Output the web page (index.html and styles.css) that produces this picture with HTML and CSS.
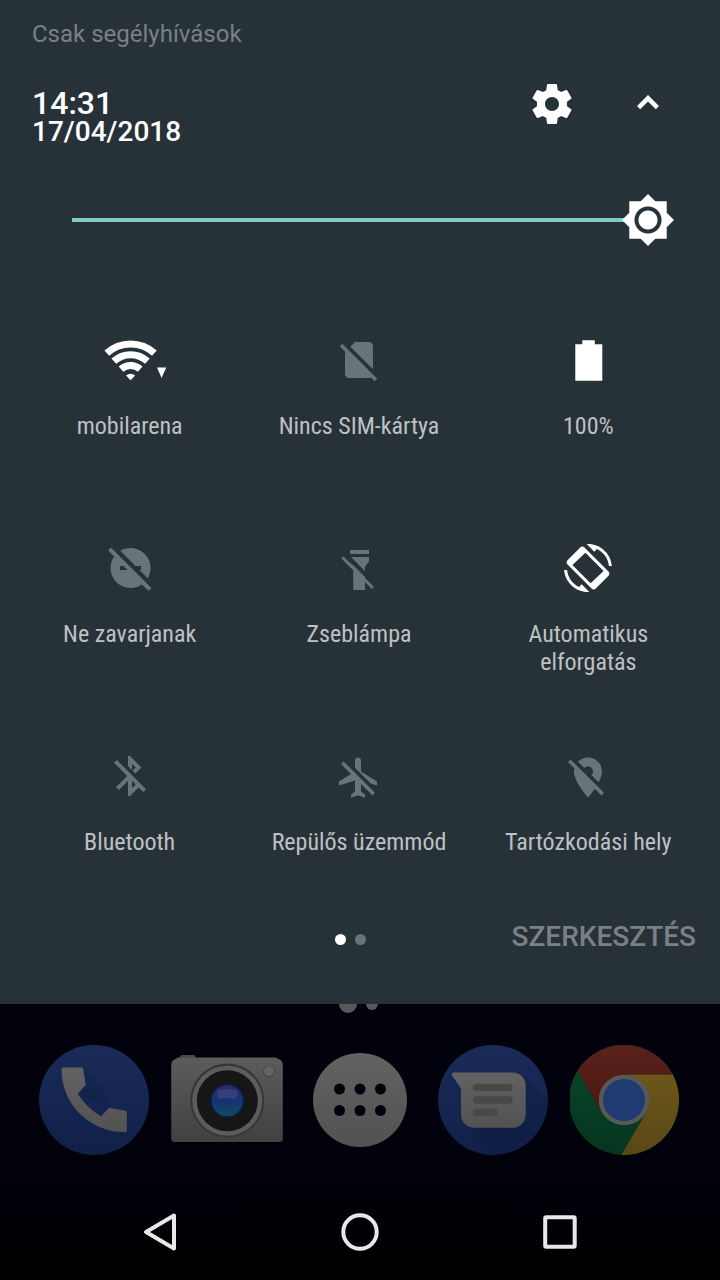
FILE: index.html
```html
<!DOCTYPE html>
<html lang="hu">
<head>
<meta charset="utf-8">
<meta name="viewport" content="width=device-width, initial-scale=1">
<title>Gyorsbeállítások</title>
<link rel="stylesheet" href="styles.css">
</head>
<body>
<main class="panel">
  <p class="carrier">Csak segélyhívások</p>
  <header class="header">
    <div class="clock">
      <time class="time">14:31</time>
      <time class="date" datetime="2018-04-17">17/04/2018</time>
    </div>
    <div class="actions">
      <button class="icon-button" type="button" aria-label="Beállítások">
        <svg width="48" height="48" viewBox="0 0 24 24"><path d="M19.43 12.98c.04-.32.07-.64.07-.98s-.03-.66-.07-.98l2.11-1.65c.19-.15.24-.42.12-.64l-2-3.46c-.12-.22-.39-.3-.61-.22l-2.49 1c-.52-.4-1.08-.73-1.69-.98l-.38-2.65C14.46 2.18 14.25 2 14 2h-4c-.25 0-.46.18-.49.42l-.38 2.65c-.61.25-1.17.59-1.69.98l-2.49-1c-.23-.09-.49 0-.61.22l-2 3.46c-.13.22-.07.49.12.64l2.11 1.65c-.04.32-.07.65-.07.98s.03.66.07.98l-2.11 1.65c-.19.15-.24.42-.12.64l2 3.46c.12.22.39.3.61.22l2.49-1c.52.4 1.08.73 1.69.98l.38 2.65c.03.24.24.42.49.42h4c.25 0 .46-.18.49-.42l.38-2.65c.61-.25 1.17-.59 1.69-.98l2.49 1c.23.09.49 0 .61-.22l2-3.46c.12-.22.07-.49-.12-.64l-2.11-1.65zM12 15.5c-1.93 0-3.5-1.57-3.5-3.5s1.57-3.5 3.5-3.5 3.5 1.57 3.5 3.5-1.57 3.5-3.5 3.5z"/></svg>
      </button>
      <button class="icon-button" type="button" aria-label="Összecsukás">
        <svg width="48" height="48" viewBox="0 0 48 48"><path d="M24 15L13 26l3.200 3.200L24 21.400l7.800 7.800L35 26z"/></svg>
      </button>
    </div>
  </header>

  <div class="brightness">
    <input class="slider" type="range" min="0" max="100" value="100" aria-label="Fényerő">
  </div>

  <div class="tiles">
    <button class="tile on" type="button">
      <svg width="80" height="48" viewBox="-40 -24 80 48">
        <g fill="none" stroke="#fff" stroke-width="7"><path d="M-23.200-6.800a35.500 35.500 0 0 1 47.600 0"/><path d="M-16.200 1.200a25 25 0 0 1 33.600 0"/><path d="M-9 9.200a14.500 14.500 0 0 1 19.200 0"/></g>
        <path d="M.6 20.300L-4 15.500Q.6 11.800 5.200 15.500zM27 7.500h9.200L31.600 18z"/>
      </svg>
      <span class="label">mobilarena</span>
    </button>
    <button class="tile off" type="button">
      <svg width="48" height="48" viewBox="0 0 24 24"><path d="M18.990 5c0-1.100-.89-2-1.990-2h-7L7.660 5.340 19 16.680 18.990 5zM3.650 3.880L2.380 5.150 5 7.770V19c0 1.100.9 2 2 2h10.010c.35 0 .67-.1.960-.26l1.880 1.880 1.270-1.270L3.650 3.880z"/></svg>
      <span class="label">Nincs SIM-kártya</span>
    </button>
    <button class="tile on" type="button">
      <svg width="48" height="48" viewBox="0 0 48 48"><path d="M18.300 4.300h12.500v4h7.500v36.500H11.300V8.300h7z"/></svg>
      <span class="label">100%</span>
    </button>
    <button class="tile off" type="button">
      <svg width="48" height="48" viewBox="0 0 48 48">
        <path d="M24.500 4a20 20 0 1 0 .1 0zM14 22v4h21V22z" fill-rule="evenodd"/>
        <path class="cut" d="M3-1L50 46"/><path class="slash wide" d="M3.500 5L44 45.500"/>
      </svg>
      <span class="label">Ne zavarjanak</span>
    </button>
    <button class="tile off" type="button">
      <svg width="48" height="48" viewBox="0 0 48 48">
        <path d="M15 6h19v4H15zM15 13h19v4l-4 6v23H18.500V23L15 17z"/>
        <path class="cut wide-cut" d="M9 9L42 42"/><path class="slash" d="M7.500 13.500L38 44"/>
        <path d="M18.500 27l11 11v8h-11z"/>
      </svg>
      <span class="label">Zseblámpa</span>
    </button>
    <button class="tile on" type="button">
      <svg width="48" height="48" viewBox="0 0 24 24"><path fill-rule="evenodd" d="M16.480 2.520c3.270 1.550 5.610 4.720 5.970 8.480h1.500C23.440 4.840 18.290 0 12 0l-.66.03 3.810 3.810 1.330-1.320zM10.230 1.750c-.59-.59-1.540-.59-2.120 0L1.750 8.110c-.59.59-.59 1.540 0 2.120l12.020 12.020c.59.59 1.540.59 2.120 0l6.360-6.360c.59-.59.59-1.540 0-2.120L10.230 1.750zM10.700 4.400L19.800 13.500 13.300 19.600 4.200 10.500zM7.520 21.480C4.250 19.940 1.910 16.760 1.550 13H.05C.56 19.160 5.710 24 12 24l.66-.03-3.810-3.810-1.330 1.320z"/></svg>
      <span class="label">Automatikus elforgatás</span>
    </button>
    <button class="tile off" type="button">
      <svg width="48" height="48" viewBox="0 0 24 24"><path d="M13 5.830l1.880 1.880-1.600 1.600 1.410 1.410 3.020-3.020L12 2h-1v5.030l2 2v-3.200zM5.410 4L4 5.410 10.590 12 5 17.590 6.410 19 11 14.410V22h1l4.290-4.290 2.300 2.290L20 18.590 5.410 4zM13 18.170v-3.760l1.880 1.880L13 18.170z"/></svg>
      <span class="label">Bluetooth</span>
    </button>
    <button class="tile off" type="button">
      <svg width="48" height="48" viewBox="0 -.7 24 24"><path d="M13 9V3.500c0-.83-.67-1.500-1.500-1.500S10 2.670 10 3.500v3.680l7.830 7.830L21 16v-2l-8-5zM3 5.270l4.990 4.990L2 14v2l8-2.500V19l-2 1.500V22l3.500-1 3.500 1v-1.500L13 19v-3.730L18.730 21 20 19.730 4.270 4 3 5.270z"/></svg>
      <span class="label">Repülős üzemmód</span>
    </button>
    <button class="tile off" type="button">
      <svg width="48" height="48" viewBox="0 -.7 24 24"><path d="M12 6.500c1.380 0 2.500 1.120 2.500 2.500 0 .74-.33 1.390-.83 1.850l3.630 3.630c.98-1.860 1.700-3.800 1.700-5.480 0-3.870-3.130-7-7-7-1.980 0-3.760.83-5.040 2.150l3.190 3.190c.46-.52 1.110-.84 1.850-.84zm4.370 9.600l-4.630-4.630-.11-.11L3.270 3 2 4.270l3.180 3.180C5.070 7.950 5 8.470 5 9c0 5.250 7 13 7 13s1.670-1.850 3.380-4.350L18.730 21 20 19.730l-3.630-3.630z"/></svg>
      <span class="label">Tartózkodási hely</span>
    </button>
  </div>

  <footer class="footer">
    <div class="pager"><span class="dot current"></span><span class="dot"></span></div>
    <button class="edit" type="button">SZERKESZTÉS</button>
  </footer>
</main>

<section class="home">
  <div class="home-pager"><span class="home-dot current"></span><span class="home-dot"></span></div>
  <div class="dock">
    <button class="app" type="button" aria-label="Telefon">
      <svg width="112" height="112" viewBox="-56 -56 112 112">
        <defs>
          <linearGradient id="blue" x1="0" y1="0" x2="0" y2="1"><stop offset="0" stop-color="#1a2b59"/><stop offset="1" stop-color="#102048"/></linearGradient>
          <linearGradient id="grey" x1="0" y1="0" x2="0" y2="1"><stop offset="0" stop-color="#626262"/><stop offset="1" stop-color="#525252"/></linearGradient>
        </defs>
        <circle r="55" fill="url(#blue)"/>
        <path fill="#0d1a3c" opacity=".25" d="M-11-32L12 -8 14 8-16-6z"/>
        <path fill="url(#grey)" d="M-31-32.500h18.500q1.500 0 1.700 1.500l2.400 15q.1 1-.6 1.700L-16.300-6Q-7 8 7 16.300L14 8.900q1-1 2-.8l15.500 2.700q1.300.2 1.300 1.700v18q0 1.700-1.700 1.700C-4 32-32.500 5-32.500-31q0-1.500 1.500-1.500z"/>
      </svg>
    </button>
    <button class="app" type="button" aria-label="Kamera">
      <svg width="112" height="112" viewBox="-56 -56 112 112">
        <defs>
          <linearGradient id="body" x1="0" y1="0" x2="0" y2="1"><stop offset="0" stop-color="#5c5c5c"/><stop offset="1" stop-color="#414141"/></linearGradient>
          <linearGradient id="lens" x1="0" y1="0" x2="0" y2="1"><stop offset="0" stop-color="#2e2a66"/><stop offset=".5" stop-color="#163372"/><stop offset="1" stop-color="#124a5c"/></linearGradient>
        </defs>
        <rect x="-47" y="-45" width="15.500" height="4.500" rx="2" fill="#484848"/>
        <path fill="url(#body)" d="M-49-42.500h98l5 3q1.800 1.500 1.800 4v74q0 3.500-3.500 3.500h-104.600q-3.500 0-3.500-3.500v-74q0-2.500 1.800-4z"/>
        <circle cx=".3" cy=".5" r="37" fill="#363636"/>
        <circle cx=".3" cy=".7" r="35" fill="#5c5c5c"/>
        <circle cx=".3" cy=".7" r="30.500" fill="#161616"/>
        <circle cx=".3" cy=".7" r="17" fill="#0e1a4c"/>
        <circle cx=".3" cy=".7" r="15.500" fill="url(#lens)"/>
        <path d="M-10-9Q0-13 11-9L9-1Q0-3-9-1z" fill="#6a70a8" opacity=".28"/>
        <circle cx="42" cy="-28.300" r="6" fill="#484848"/><circle cx="42" cy="-28.800" r="5" fill="#646464"/>
      </svg>
    </button>
    <button class="app" type="button" aria-label="Alkalmazások">
      <svg width="112" height="112" viewBox="-56 -56 112 112">
        <circle r="47" fill="url(#grey)"/>
        <g fill="#00010a"><circle cx="-20.500" cy="-11" r="5.500"/><circle cy="-11" r="5.500"/><circle cx="20.500" cy="-11" r="5.500"/><circle cx="-20.500" cy="10.500" r="5.500"/><circle cy="10.500" r="5.500"/><circle cx="20.500" cy="10.500" r="5.500"/></g>
      </svg>
    </button>
    <button class="app" type="button" aria-label="Üzenetek">
      <svg width="112" height="112" viewBox="-56 -56 112 112">
        <circle r="55" fill="url(#blue)"/>
        <path fill="#0d1a3c" opacity=".3" d="M31-23L55-1A55 55 0 0 1 0 55L-28 24z"/>
        <path fill="url(#grey)" d="M-39.500-27.500h59A13 13 0 0 1 32.700-14.500v29.200a13 13 0 0 1-13 13h-38.700a13 13 0 0 1-13-13V-11.500l-9-13q-1-2.500 1.500-3z"/>
        <path stroke="#484848" stroke-width="7.500" stroke-linecap="round" d="M-16.500-12.500h32.500M-16.500 0h32.500M-16.500 12.500h17.500"/>
      </svg>
    </button>
    <button class="app" type="button" aria-label="Chrome">
      <svg width="112" height="112" viewBox="-54 -56 112 112">
        <defs>
          <linearGradient id="red" x1="0" y1="0" x2="0" y2="1"><stop offset="0" stop-color="#5a221b"/><stop offset="1" stop-color="#4c1713"/></linearGradient>
          <linearGradient id="yellow" x1="0" y1="0" x2="0" y2="1"><stop offset="0" stop-color="#6c5719"/><stop offset="1" stop-color="#594716"/></linearGradient>
          <linearGradient id="green" x1="0" y1="0" x2="0" y2="1"><stop offset="0" stop-color="#07482a"/><stop offset="1" stop-color="#06351f"/></linearGradient>
        </defs>
        <circle r="55" fill="url(#green)"/>
        <path fill="url(#yellow)" d="M0-25.500h48.700A55 55 0 0 1-2.500 55L22 12.700z"/>
        <path fill="url(#red)" d="M-46.400-29.500A55 55 0 0 1 48.700-25.500H0L-22 12.700z"/>
        <circle r="25.300" fill="#585858"/><circle r="21" fill="#1f3b72"/>
      </svg>
    </button>
  </div>
  <nav class="nav">
    <button class="nav-button" type="button" aria-label="Vissza"><svg width="48" height="48" viewBox="0 0 48 48"><path d="M38 7.500v33L10 24z"/></svg></button>
    <button class="nav-button" type="button" aria-label="Kezdőképernyő"><svg width="48" height="48" viewBox="0 0 48 48"><circle cx="24" cy="24" r="16.700"/></svg></button>
    <button class="nav-button" type="button" aria-label="Áttekintés"><svg width="48" height="48" viewBox="0 0 48 48"><rect x="9.200" y="9.300" width="29.500" height="29.500" rx="1"/></svg></button>
  </nav>
</section>
</body>
</html>
```
FILE: styles.css
```css
* {
  box-sizing: border-box;
}

body {
  margin: 0;
  min-height: 100vh;
  display: flex;
  flex-direction: column;
  background: #000;
  color: #fff;
  font-family: Roboto, sans-serif;
}

button {
  margin: 0;
  padding: 0;
  border: 0;
  background: none;
  color: inherit;
  font: inherit;
}

svg {
  display: block;
  fill: currentColor;
}

.panel {
  padding: 20px 0 51px;
  background: #273238;
}

.carrier {
  margin: 0;
  padding: 0 32px;
  font-size: 24px;
  line-height: 28px;
  color: #7a8083;
}

.header {
  display: flex;
  justify-content: space-between;
  align-items: flex-start;
  padding: 32px 48px 0 32px;
}

.clock {
  display: flex;
  flex-direction: column;
  padding-top: 8px;
  font-weight: 500;
}

.time {
  font-size: 32px;
  line-height: 30px;
}

.date {
  font-size: 28px;
  line-height: 28px;
}

.actions {
  display: flex;
  gap: 48px;
}

.brightness {
  padding: 48px 46px 0 72px;
}

.slider {
  appearance: none;
  display: block;
  width: 100%;
  height: 52px;
  margin: 0;
  background: none;
}

.slider::-webkit-slider-runnable-track {
  height: 4px;
  background: linear-gradient(#80cbc4, #80cbc4) left / calc(100% - 26px) 100% no-repeat;
}

.slider::-webkit-slider-thumb {
  appearance: none;
  width: 52px;
  height: 52px;
  margin-top: -24px;
  background: radial-gradient(circle, #fff 9px, #273238 10px, #273238 13px, #fff 14px);
  clip-path: polygon(50% 0, 64% 14%, 86% 14%, 86% 36%, 100% 50%, 86% 64%, 86% 86%, 64% 86%, 50% 100%, 36% 86%, 14% 86%, 14% 64%, 0 50%, 14% 36%, 14% 14%, 36% 14%);
}

.tiles {
  display: grid;
  grid-template-columns: repeat(3, 1fr);
  grid-auto-rows: minmax(132px, auto);
  row-gap: 76px;
  padding: 90px 17px 0 15px;
}

.tile {
  display: flex;
  flex-direction: column;
  align-items: center;
  gap: 28px;
}

.tile.off {
  color: #69747a;
}

.label {
  max-width: 200px;
  font-family: "Roboto Condensed", "Liberation Sans Narrow", Roboto, sans-serif;
  font-size: 24px;
  line-height: 28px;
  text-align: center;
  color: #bec1c3;
}

.cut {
  stroke: #273238;
  stroke-width: 5;
}

.wide-cut {
  stroke-width: 4;
}

.slash {
  stroke: currentColor;
  stroke-width: 3;
}

.slash.wide {
  stroke-width: 4;
}

.footer {
  display: grid;
  grid-template-columns: 1fr auto 1fr;
  align-items: center;
  padding: 37px 24px 0 4px;
}

.pager {
  grid-column: 2;
  display: flex;
  gap: 9px;
  padding-top: 5px;
}

.dot {
  width: 11px;
  height: 11px;
  border-radius: 50%;
  background: #69747a;
}

.dot.current {
  background: #fff;
}

.edit {
  justify-self: end;
  font-size: 28px;
  font-weight: 500;
  line-height: 32px;
  color: #7a8185;
}

.home {
  flex: 1;
  display: flex;
  flex-direction: column;
  overflow: hidden;
  background: linear-gradient(#01020c, #00010a 60%, #000);
}

.home-pager {
  display: flex;
  justify-content: center;
  align-items: center;
  gap: 9px;
  height: 18px;
  margin-top: -9px;
  padding-right: 4px;
}

.home-dot {
  width: 12px;
  height: 12px;
  border-radius: 50%;
  background: #585858;
}

.home-dot.current {
  width: 18px;
  height: 18px;
}

.dock {
  display: grid;
  grid-template-columns: repeat(5, 1fr);
  justify-items: center;
  padding: 31px 28px 28px;
}

.nav {
  display: grid;
  grid-template-columns: repeat(3, 1fr);
  place-items: center;
  height: 96px;
  margin-top: auto;
  padding: 0 60px;
}

.nav-button svg {
  fill: none;
  stroke: #e8e8e8;
  stroke-width: 4;
  stroke-linejoin: round;
}
```
